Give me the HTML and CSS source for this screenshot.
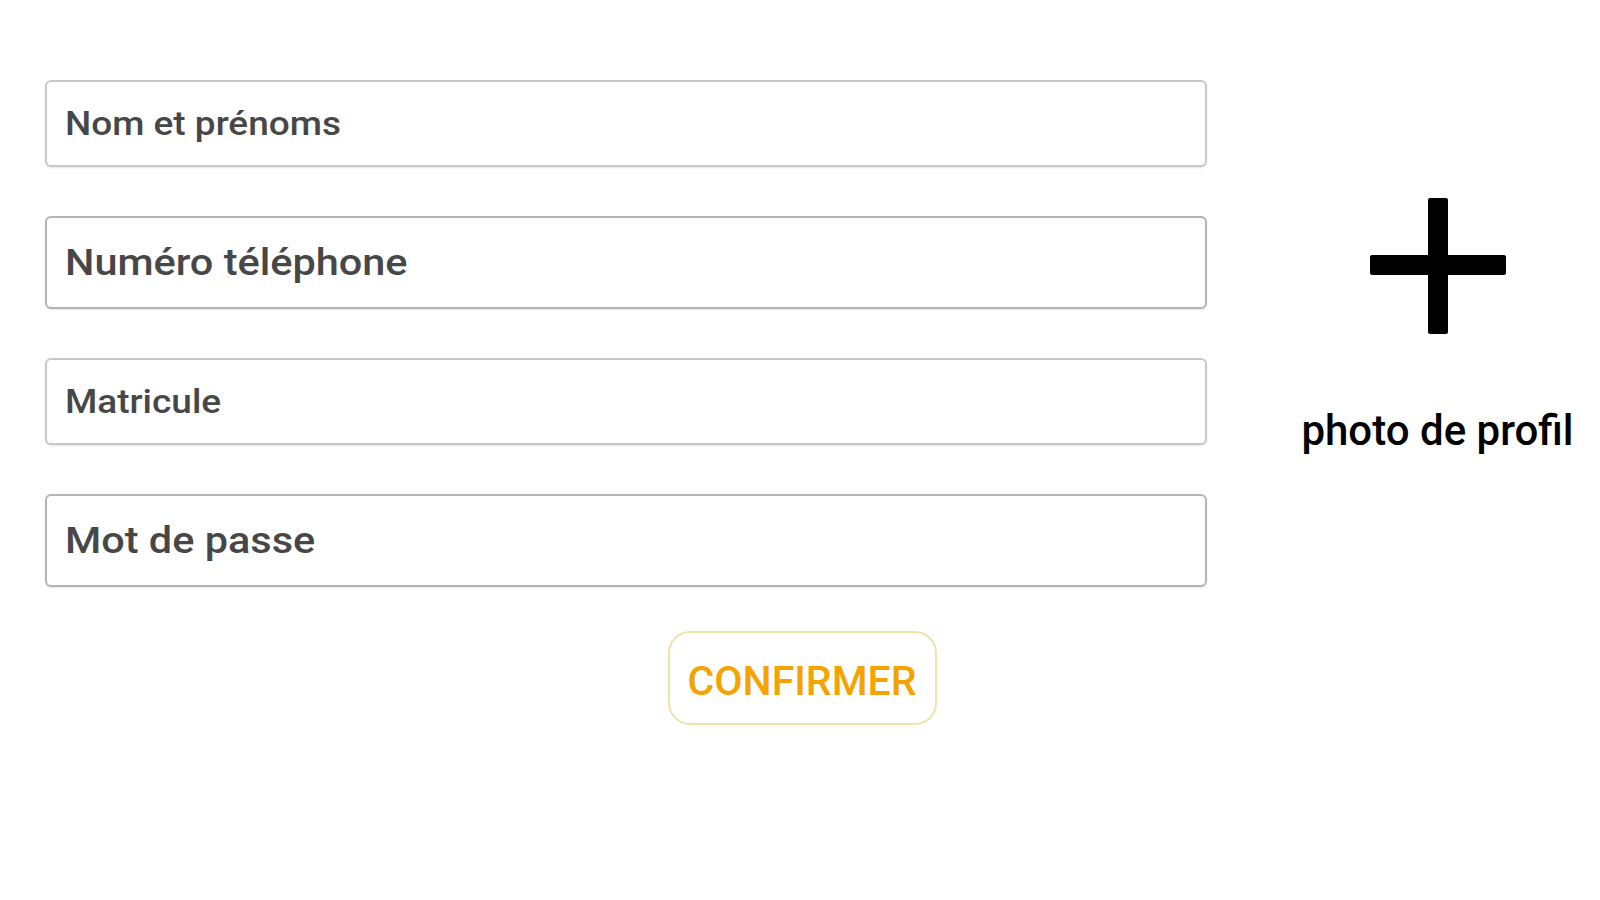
FILE: index.html
```html
<!DOCTYPE html>
<html lang="fr">
<head>
<meta charset="utf-8">
<title>Inscription</title>
<link rel="stylesheet" href="styles.css">
</head>
<body>
<main class="page">
  <div class="row">
    <form class="form">
      <div class="field field-sm"><span class="ph">Nom et prénoms</span></div>
      <div class="field field-lg"><span class="ph">Numéro téléphone</span></div>
      <div class="field field-sm"><span class="ph">Matricule</span></div>
      <div class="field field-lg"><span class="ph">Mot de passe</span></div>
    </form>
    <div class="photo">
      <svg class="plus" width="136" height="136" viewBox="0 0 136 136" aria-hidden="true">
        <rect x="58" y="0" width="20" height="136" rx="2" fill="#000"/>
        <rect x="0" y="57" width="136" height="20" rx="2" fill="#000"/>
      </svg>
      <div class="photo-label">photo de profil</div>
    </div>
  </div>
  <div class="actions">
    <button class="confirm" type="button">CONFIRMER</button>
  </div>
</main>
</body>
</html>
```

FILE: styles.css
```css
html, body {
  margin: 0;
  padding: 0;
  background: #ffffff;
}

body {
  font-family: Roboto, "Liberation Sans", Arial, sans-serif;
  width: 1600px;
  height: 900px;
  overflow: hidden;
}

.page {
  display: flex;
  flex-direction: column;
  padding-top: 80px;
}

.row {
  display: flex;
  align-items: flex-start;
}

.form {
  display: flex;
  flex-direction: column;
  gap: 49px;
  margin: 0 0 0 45px;
  width: 1162px;
}

.field {
  box-sizing: border-box;
  display: flex;
  align-items: center;
  border: 2px solid #c4c4c4;
  border-radius: 6px;
  padding-left: 18px;
  background: #fff;
  box-shadow: 0 1px 2px rgba(0,0,0,0.10);
}

.field-sm {
  height: 87px;
  border-color: #c8c8c8;
}

.field-lg {
  height: 93px;
  border-color: #b4b4b4;
}

.ph {
  display: inline-block;
  color: #474747;
  font-weight: 500;
  transform: scaleX(1.12);
  transform-origin: left center;
  white-space: nowrap;
}

.field-sm .ph {
  font-size: 33px;
}

.field-lg .ph {
  font-size: 37px;
}

.photo {
  display: flex;
  flex-direction: column;
  align-items: center;
  width: 325px;
  margin-left: 68px;
  padding-top: 118px;
}

.plus {
  display: block;
}

.photo-label {
  margin-top: 72px;
  font-size: 42px;
  line-height: 50px;
  font-weight: 500;
  color: #000;
  white-space: nowrap;
}

.actions {
  display: flex;
  justify-content: center;
  padding-top: 44px;
  padding-left: 4px;
}

.confirm {
  box-sizing: border-box;
  width: 269px;
  height: 94px;
  border: 2px solid #efe3a8;
  border-radius: 22px;
  background: #fff;
  color: #f4a300;
  font-family: Roboto, "Liberation Sans", Arial, sans-serif;
  font-size: 41px;
  font-weight: 500;
  padding: 6px 0 0;
  cursor: pointer;
}
```
